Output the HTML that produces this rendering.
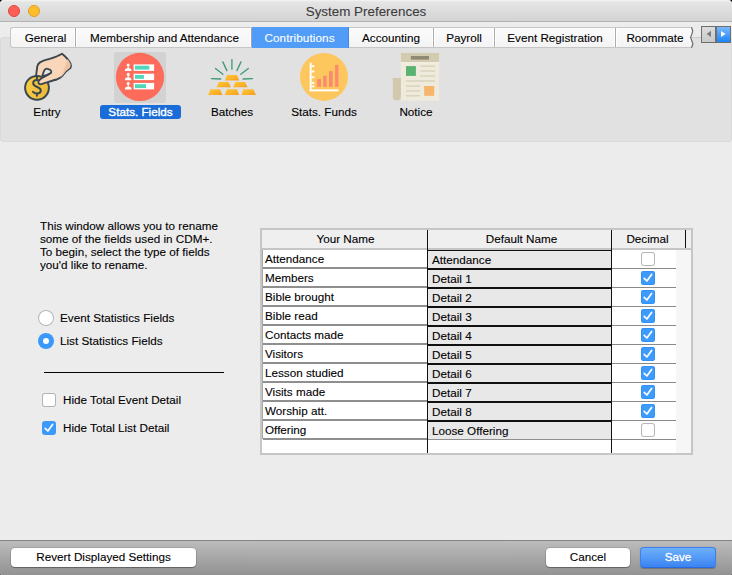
<!DOCTYPE html>
<html><head><meta charset="utf-8">
<style>
*{margin:0;padding:0;box-sizing:border-box}
html,body{width:732px;height:575px;overflow:hidden;background:#000}
.win *{-webkit-text-stroke:0.1px currentColor}
body{font-family:"Liberation Sans",sans-serif;color:#000;font-size:11.7px;position:relative}
.a{position:absolute}
.win{left:0;top:0;width:732px;height:575px;background:#ececec;border-radius:4px 4px 2px 2px;overflow:hidden}
.title{left:0;top:0;width:732px;height:22px;background:linear-gradient(#f4f4f4 0,#e5e5e5 2px,#d3d3d3 21px);border-bottom:1px solid #b3b3b3}
.tl{width:12px;height:12px;border-radius:50%}
.ttxt{left:0;width:732px;top:4px;text-align:center;font-size:13.4px;color:#3c3c3c;line-height:16px}
.panel{left:0;top:37px;width:732px;height:105px;background:#e1e1e1;border-radius:4px;box-shadow:0 0 0 1px #dadada inset}
.tabs{left:10px;top:27px;height:21px;width:678px;background:linear-gradient(#fbfbfb,#f3f3f3);border:1px solid #c6c6c6;border-right:none;border-radius:3px 0 0 3px}
.tab{top:0;height:19px;line-height:19px;text-align:center;white-space:nowrap}
.sep{top:0;width:1px;height:19px;background:#ababab;box-shadow:-1px 0 0 #fff,1px 0 0 #fff}
.lbl{top:104px;height:15px;line-height:15px;text-align:center;white-space:nowrap}
.row{height:19px;line-height:19px;white-space:nowrap}
.th{top:230px;height:18px;line-height:18px;text-align:center;white-space:nowrap}
.td{height:17px;line-height:17px;white-space:nowrap}
.cbx{width:14px;height:14px;border-radius:3px;background:#fff;box-shadow:inset 0 0 0 1px #b8b8b8}
.cbx.on{background:#3d9bfc;box-shadow:inset 0 0 0 0.5px #2a86f0}
</style></head><body>
<div class="a win">
  <div class="a title"></div>
  <svg class="a" style="left:8px;top:5px" width="12" height="12"><circle cx="6" cy="6" r="5.5" fill="#fd5f57" stroke="#e0443d" stroke-width="1"/></svg>
  <svg class="a" style="left:28px;top:5px" width="12" height="12"><circle cx="6" cy="6" r="5.5" fill="#febd2f" stroke="#de9f22" stroke-width="1"/></svg>
  <div class="a ttxt">System Preferences</div>

  <div class="a panel"></div>

  <!-- tabs -->
  <div class="a tabs">
    <div class="a tab" style="left:2.5px;width:64px">General</div>
    <div class="a sep" style="left:64px"></div>
    <div class="a tab" style="left:66px;width:175px">Membership and Attendance</div>
    <div class="a sep" style="left:240px;background:#a3a3a3"></div>
    <div class="a tab" style="left:241px;top:-1px;width:97px;height:21px;line-height:21px;background:#519cf6;color:#fff;box-shadow:inset -1px 0 0 #4a88dc;-webkit-text-stroke:0.25px #fff"><span style="position:relative;left:-1px;letter-spacing:0.1px">Contributions</span></div>
    <div class="a tab" style="left:338px;width:84px">Accounting</div>
    <div class="a sep" style="left:422px"></div>
    <div class="a tab" style="left:423px;width:60px">Payroll</div>
    <div class="a sep" style="left:483px"></div>
    <div class="a tab" style="left:484px;width:120px">Event Registration</div>
    <div class="a sep" style="left:604px"></div>
    <div class="a tab" style="left:604px;width:80px">Roommate</div>
  </div>

  <!-- tab scroller -->
  <div class="a" style="left:692px;top:37px;width:9px;height:1px;background:#cdcdcd"></div>
  <svg class="a" style="left:686px;top:27px" width="10" height="21" viewBox="0 0 10 21">
    <defs><linearGradient id="tabg" x1="0" y1="0" x2="0" y2="1"><stop offset="0" stop-color="#fbfbfb"/><stop offset="1" stop-color="#f3f3f3"/></linearGradient></defs>
    <path d="M0 0 H5.5 L6.7 3.8 L5.8 7.4 L4.6 10.6 L5.8 13.7 L6.9 16.9 L5.5 21 H0 Z" fill="url(#tabg)"/>
    <path d="M0 0.5 H5.7 M0 20.5 H5.7" stroke="#c6c6c6" stroke-width="1"/>
    <path d="M5.5 0.2 L6.7 3.8 L5.8 7.4 L4.6 10.6 L5.8 13.7 L6.9 16.9 L5.5 20.8" stroke="#6a6a6a" stroke-width="1.2" fill="none"/>
  </svg>
  <div class="a" style="left:701px;top:26px;width:30px;height:17px;background:#6e6e6e">
    <div class="a" style="left:1px;top:1px;width:13px;height:15px;background:linear-gradient(#dcdcdc,#c9c9c9)"></div>
    <div class="a" style="left:15.5px;top:1px;width:13.5px;height:15px;background:linear-gradient(#7ab8fb,#1b84f8)"></div>
    <svg class="a" style="left:5px;top:4px" width="6" height="8"><path d="M5 0.8 V7.1 L0.6 4 Z" fill="#7a7a7a"/></svg>
    <svg class="a" style="left:20px;top:4px" width="6" height="8"><path d="M0 1 V7.1 L4.6 4 Z" fill="#fff"/></svg>
  </div>

  <!-- toolbar icons -->
  <!-- entry icon -->
  <svg class="a" style="left:20px;top:50px" width="56" height="52" viewBox="0 0 56 52">
    <path d="M16.1 25.5 L17.3 16.3 C17.6 14.6 18.6 13.3 20 12.4 C22.5 11 25 10.1 27.6 9.4 C31 8.5 35.5 7.5 38.9 5.3 L42 3.75 C45.5 6.5 49 10.5 50.6 14 C51.1 15.2 51.3 16.5 50.5 17.8 C48.5 19.8 46.5 20.7 45 22.5 C43.5 24.5 42 27 39.5 28.2 C38 29 37 29.5 35.8 29.7 L22 31 Z" fill="#f9d5b9" stroke="#3a474d" stroke-width="1.9" stroke-linejoin="round"/>
    <path d="M47.5 9 C49 11 50.5 13.5 50.6 14.5 C50.8 16 50.3 17.3 49.5 18 C47.5 19.8 46.2 20.8 44.8 22.6 C43.5 24.5 42 26.6 39.8 27.8 C42 25 44 21 47.5 9 Z" fill="#eec3a3"/>
    <defs><linearGradient id="coin" x1="0" y1="0" x2="1" y2="0.3"><stop offset="0" stop-color="#f9cd47"/><stop offset="1" stop-color="#ecbb3b"/></linearGradient></defs><circle cx="17" cy="37.8" r="11.9" fill="url(#coin)" stroke="#3a474d" stroke-width="2"/>
    <path d="M20.4 31.6 C19.6 30.4 18.2 29.9 16.7 29.9 C14.4 29.9 12.9 31.6 13.2 33.5 C13.5 35.4 15.5 36.3 17.2 37 C19.2 37.8 20.9 38.8 20.8 40.6 C20.7 42.4 19 43.4 17 43.4 C15.3 43.4 13.8 42.7 13 41.8 M16.9 27.5 V29.9 M16.9 43.4 V45.8" fill="none" stroke="#3a474d" stroke-width="2" stroke-linecap="round"/>
    <path d="M36 29.6 C32 30.5 27 32.4 22.5 33.8 C21 34.3 19.8 34.5 19 33.8 C18.2 33 18.2 31.3 19.2 30.3 C21 28.6 24 26.8 26.4 25.7 C28 25 29.5 24 31 22.8 L37 24 Z" fill="#f9d5b9"/>
    <path d="M35.8 29.7 C32 30.5 27 32.4 22.5 33.8 C21 34.3 19.8 34.5 19 33.8 C18.2 33 18.2 31.3 19.2 30.3 C21 28.6 24 26.8 26.4 25.7 C28 25 29.5 24 31 22.8" fill="none" stroke="#3a474d" stroke-width="1.9" stroke-linecap="round" stroke-linejoin="round"/>
    <path d="M22.2 26.2 C22.9 24 23.5 21.6 24.5 20.1 C25.3 19 26.5 18.5 27.6 18.8 C29.2 19.2 30.8 20.2 31.3 21.2 C31.6 22 31 22.6 30.2 23.2 C27.8 24.6 24.8 25.6 22.2 26.2 Z" fill="#e2e2e2" stroke="#3a474d" stroke-width="1.8" stroke-linejoin="round"/>
  </svg>

  <div class="a" style="left:114px;top:52px;width:52px;height:51px;background:#d2d2d2;border-radius:3px"></div>
  <div class="a lbl" style="left:7px;width:80px">Entry</div>
  <div class="a" style="left:100px;top:105px;width:81px;height:14px;background:#1a6dd9;border-radius:3px"></div>
  <div class="a lbl" style="left:100px;width:81px;color:#fff;-webkit-text-stroke:0.35px #fff">Stats. Fields</div>
  <div class="a lbl" style="left:192px;width:80px">Batches</div>
  <div class="a lbl" style="left:284px;width:80px">Stats. Funds</div>
  <div class="a lbl" style="left:376px;width:80px">Notice</div>

  <!-- stats fields icon -->
  <svg class="a" style="left:112px;top:50px" width="56" height="56" viewBox="0 0 56 56">
    <circle cx="28" cy="26.9" r="24.1" fill="#fd6c5a"/>
    <g fill="#fff">
      <rect x="21.6" y="14.4" width="20.5" height="6.5"/><rect x="21.6" y="23.7" width="20.5" height="6.4"/><rect x="21.6" y="32.9" width="20.5" height="6.5"/>
    </g>
    <g fill="#52d6b9">
      <rect x="22.9" y="15.7" width="14.4" height="3.9"/><rect x="22.9" y="25" width="9" height="3.8"/><rect x="22.9" y="34.2" width="11.2" height="3.9"/>
    </g>
    <g fill="#fff">
      <ellipse cx="16.2" cy="15.1" rx="1.5" ry="1.7"/><rect x="15.7" y="16.0" width="1.0" height="2.2"/><path d="M12.9 20.9 C12.9 18.9 13.8 18.0 16.2 18.0 C18.6 18.0 19.5 18.9 19.5 20.9 Z"/>
      <ellipse cx="16.2" cy="24.4" rx="1.5" ry="1.7"/><rect x="15.7" y="25.3" width="1.0" height="2.2"/><path d="M12.9 30.2 C12.9 28.2 13.8 27.3 16.2 27.3 C18.6 27.3 19.5 28.2 19.5 30.2 Z"/>
      <ellipse cx="16.2" cy="33.6" rx="1.5" ry="1.7"/><rect x="15.7" y="34.5" width="1.0" height="2.2"/><path d="M12.9 39.4 C12.9 37.4 13.8 36.5 16.2 36.5 C18.6 36.5 19.5 37.4 19.5 39.4 Z"/>
    </g>
  </svg>
  <!-- batches icon -->
  <svg class="a" style="left:204px;top:54px" width="56" height="44" viewBox="0 0 56 44">
    <defs><linearGradient id="gold" x1="0" y1="0" x2="1" y2="1"><stop offset="0" stop-color="#ffc631"/><stop offset="0.5" stop-color="#fdb52a"/><stop offset="1" stop-color="#f09c26"/></linearGradient></defs>
    <g stroke="#3d9b6f" stroke-width="1.3" stroke-linecap="round" fill="none">
      <path d="M27.9 5.6 V15.2"/><path d="M18.8 7.9 L22.9 16.6"/><path d="M37 7.9 L32.9 16.6"/>
      <path d="M11.5 14.5 L18.9 20.3"/><path d="M44.3 14.5 L36.8 20.3"/><path d="M7.4 24.6 L16.7 25"/><path d="M39.1 25 L48.5 24.6"/>
    </g>
    <g fill="url(#gold)">
      <path d="M23 21 H32.9 L35.2 26.4 H21 Z"/>
      <path d="M14.9 27.9 H24.5 L26.8 33.3 H12.6 Z"/><path d="M31.4 27.9 H40.9 L43.6 33.3 H29.1 Z"/>
      <path d="M6.5 35.3 H16.1 L18.4 40.9 H4.2 Z"/><path d="M23 35.3 H32.9 L35.2 40.9 H20.7 Z"/><path d="M39.4 35.3 H49.3 L52 40.9 H37.5 Z"/>
    </g>
  </svg>
  <!-- stats funds icon -->
  <svg class="a" style="left:298px;top:50px" width="52" height="54" viewBox="0 0 52 54">
    <circle cx="26" cy="26.9" r="24" fill="#fdc75d"/>
    <g fill="#fff">
      <rect x="11.7" y="12.7" width="1.9" height="28.6"/><rect x="11.7" y="39.4" width="28.9" height="1.9"/>
      <rect x="13.6" y="15.3" width="2.8" height="1.8"/><rect x="13.6" y="20.6" width="2.8" height="1.8"/><rect x="13.6" y="26.3" width="2.8" height="1.8"/><rect x="13.6" y="32" width="2.8" height="1.8"/><rect x="13.6" y="35.5" width="2.8" height="1.8"/>
    </g>
    <g fill="#fb8a6f">
      <rect x="19.2" y="29.1" width="3.8" height="7.7"/><rect x="25.2" y="25.8" width="3.5" height="11"/><rect x="31" y="21.1" width="3.7" height="15.7"/><rect x="37.1" y="14.8" width="3.3" height="22"/>
    </g>
  </svg>
  <!-- notice icon -->
  <svg class="a" style="left:390px;top:50px" width="52" height="54" viewBox="0 0 52 54">
    <path d="M2.8 28 H11 V46.5 A4.1 4.1 0 0 1 2.8 46.5 Z" fill="#d1c8ad"/>
    <rect x="10.9" y="2.9" width="38.2" height="47.7" fill="#efebdc"/>
    <rect x="10.9" y="2.9" width="38.2" height="9.4" fill="#d3cbb0"/><rect x="10.9" y="12.3" width="38.2" height="1" fill="#f6f3ea"/>
    <rect x="20.9" y="6" width="18.1" height="3.6" fill="#8f8a74"/>
    <rect x="16" y="16.1" width="9.9" height="9.8" fill="#5ab371"/>
    <rect x="34.2" y="36" width="10" height="9.8" fill="#f7b46b"/>
    <g fill="#d8d0b7">
      <rect x="30.3" y="15.5" width="14.7" height="1.3"/><rect x="30.3" y="20.4" width="14.7" height="1.3"/><rect x="30.3" y="25.3" width="14.7" height="1.3"/>
      <rect x="16" y="30.3" width="29" height="1.3"/>
      <rect x="16" y="35.4" width="14" height="1.3"/><rect x="16" y="40.3" width="14" height="1.3"/><rect x="16" y="45.2" width="14" height="1.3"/>
    </g>
  </svg>

  <!-- main text -->
  <div class="a" style="left:40px;top:219px;width:200px;line-height:13px">This window allows you to rename<br>some of the fields used in CDM+.<br>To begin, select the type of fields<br>you'd like to rename.</div>

  <!-- radios -->
  <div class="a" style="left:38px;top:310px;width:16px;height:16px;border-radius:50%;background:#fff;box-shadow:inset 0 0 0 1px #b4b4b4"></div>
  <div class="a" style="left:60px;top:311px;line-height:14px">Event Statistics Fields</div>
  <div class="a" style="left:38px;top:333px;width:16px;height:16px;border-radius:50%;background:#3b99fc"></div>
  <div class="a" style="left:43px;top:338px;width:6px;height:6px;border-radius:50%;background:#fff"></div>
  <div class="a" style="left:60px;top:334px;line-height:14px">List Statistics Fields</div>

  <div class="a" style="left:44px;top:372px;width:180px;height:1px;background:#000"></div>

  <!-- checkboxes -->
  <div class="a" style="left:42px;top:393px;width:14px;height:14px;border-radius:3px;background:#fff;box-shadow:inset 0 0 0 1px #b4b4b4"></div>
  <div class="a" style="left:63px;top:393px;line-height:14px">Hide Total Event Detail</div>
  <div class="a" style="left:42px;top:421px;width:14px;height:14px;border-radius:3px;background:#3b99fc"></div>
  <svg class="a" style="left:42px;top:421px" width="14" height="14"><path d="M3.2 7.4 L5.9 10 L10.6 3.4" fill="none" stroke="#fff" stroke-width="1.7" stroke-linecap="round" stroke-linejoin="round"/></svg>
  <div class="a" style="left:63px;top:421px;line-height:14px">Hide Total List Detail</div>

  <!-- table -->
  <div class="a" style="left:260px;top:228px;width:433px;height:227px;background:#c6c6c6"></div>
  <div class="a" style="left:262px;top:230px;width:429px;height:18px;background:#efefef"></div>
  <div class="a" style="left:262px;top:248px;width:429px;height:2px;background:#c5c5c5"></div>
  <div class="a" style="left:262px;top:250px;width:414px;height:203px;background:#fff"></div>
  <div class="a" style="left:676px;top:250px;width:15px;height:203px;background:#f6f6f6"></div>
  <div class="a" style="left:428px;top:251px;width:183px;height:188px;background:#e8e8e8"></div>
  <div class="a" style="left:263px;top:267px;width:164px;height:2px;background:#8f8f8f"></div>
  <div class="a" style="left:612px;top:268px;width:64px;height:1px;background:#8a8a8a"></div>
  <div class="a" style="left:263px;top:286px;width:164px;height:2px;background:#8f8f8f"></div>
  <div class="a" style="left:612px;top:287px;width:64px;height:1px;background:#8a8a8a"></div>
  <div class="a" style="left:263px;top:305px;width:164px;height:2px;background:#8f8f8f"></div>
  <div class="a" style="left:612px;top:306px;width:64px;height:1px;background:#8a8a8a"></div>
  <div class="a" style="left:263px;top:324px;width:164px;height:2px;background:#8f8f8f"></div>
  <div class="a" style="left:612px;top:325px;width:64px;height:1px;background:#8a8a8a"></div>
  <div class="a" style="left:263px;top:343px;width:164px;height:2px;background:#8f8f8f"></div>
  <div class="a" style="left:612px;top:344px;width:64px;height:1px;background:#8a8a8a"></div>
  <div class="a" style="left:263px;top:362px;width:164px;height:2px;background:#8f8f8f"></div>
  <div class="a" style="left:612px;top:363px;width:64px;height:1px;background:#8a8a8a"></div>
  <div class="a" style="left:263px;top:381px;width:164px;height:2px;background:#8f8f8f"></div>
  <div class="a" style="left:612px;top:382px;width:64px;height:1px;background:#8a8a8a"></div>
  <div class="a" style="left:263px;top:400px;width:164px;height:2px;background:#8f8f8f"></div>
  <div class="a" style="left:612px;top:401px;width:64px;height:1px;background:#8a8a8a"></div>
  <div class="a" style="left:263px;top:419px;width:164px;height:2px;background:#8f8f8f"></div>
  <div class="a" style="left:612px;top:420px;width:64px;height:1px;background:#8a8a8a"></div>
  <div class="a" style="left:263px;top:438px;width:164px;height:2px;background:#8f8f8f"></div>
  <div class="a" style="left:612px;top:439px;width:64px;height:1px;background:#8a8a8a"></div>
  <div class="a" style="left:428px;top:250px;width:183px;height:1px;background:#111"></div>
  <div class="a" style="left:428px;top:268px;width:183px;height:2px;background:#111"></div>
  <div class="a" style="left:428px;top:287px;width:183px;height:2px;background:#111"></div>
  <div class="a" style="left:428px;top:306px;width:183px;height:2px;background:#111"></div>
  <div class="a" style="left:428px;top:325px;width:183px;height:2px;background:#111"></div>
  <div class="a" style="left:428px;top:344px;width:183px;height:2px;background:#111"></div>
  <div class="a" style="left:428px;top:363px;width:183px;height:2px;background:#111"></div>
  <div class="a" style="left:428px;top:382px;width:183px;height:2px;background:#111"></div>
  <div class="a" style="left:428px;top:401px;width:183px;height:2px;background:#111"></div>
  <div class="a" style="left:428px;top:420px;width:183px;height:2px;background:#111"></div>
  <div class="a" style="left:428px;top:439px;width:183px;height:1px;background:#8f8f8f"></div>
  <div class="a" style="left:262px;top:250px;width:1px;height:189px;background:#a6a6a6"></div>
  <div class="a" style="left:427px;top:230px;width:1px;height:223px;background:#111"></div>
  <div class="a" style="left:611px;top:230px;width:1px;height:223px;background:#111"></div>
  <div class="a" style="left:685px;top:230px;width:1px;height:18px;background:#111"></div>
  <div class="a th" style="left:263px;width:165px">Your Name</div>
  <div class="a th" style="left:430px;width:183px">Default Name</div>
  <div class="a th" style="left:611px;width:73px">Decimal</div>
  <div class="a td" style="left:265px;top:250px">Attendance</div>
  <div class="a td" style="left:432px;top:251px">Attendance</div>
  <div class="a cbx" style="left:641px;top:252px"></div>
  <div class="a td" style="left:265px;top:269px">Members</div>
  <div class="a td" style="left:432px;top:270px">Detail 1</div>
  <div class="a cbx on" style="left:641px;top:271px"><svg class="a" style="left:0;top:0" width="14" height="14"><path d="M3.2 7.4 L5.9 10 L10.6 3.4" fill="none" stroke="#fff" stroke-width="1.7" stroke-linecap="round" stroke-linejoin="round"/></svg></div>
  <div class="a td" style="left:265px;top:288px">Bible brought</div>
  <div class="a td" style="left:432px;top:289px">Detail 2</div>
  <div class="a cbx on" style="left:641px;top:290px"><svg class="a" style="left:0;top:0" width="14" height="14"><path d="M3.2 7.4 L5.9 10 L10.6 3.4" fill="none" stroke="#fff" stroke-width="1.7" stroke-linecap="round" stroke-linejoin="round"/></svg></div>
  <div class="a td" style="left:265px;top:307px">Bible read</div>
  <div class="a td" style="left:432px;top:308px">Detail 3</div>
  <div class="a cbx on" style="left:641px;top:309px"><svg class="a" style="left:0;top:0" width="14" height="14"><path d="M3.2 7.4 L5.9 10 L10.6 3.4" fill="none" stroke="#fff" stroke-width="1.7" stroke-linecap="round" stroke-linejoin="round"/></svg></div>
  <div class="a td" style="left:265px;top:326px">Contacts made</div>
  <div class="a td" style="left:432px;top:327px">Detail 4</div>
  <div class="a cbx on" style="left:641px;top:328px"><svg class="a" style="left:0;top:0" width="14" height="14"><path d="M3.2 7.4 L5.9 10 L10.6 3.4" fill="none" stroke="#fff" stroke-width="1.7" stroke-linecap="round" stroke-linejoin="round"/></svg></div>
  <div class="a td" style="left:265px;top:345px">Visitors</div>
  <div class="a td" style="left:432px;top:346px">Detail 5</div>
  <div class="a cbx on" style="left:641px;top:347px"><svg class="a" style="left:0;top:0" width="14" height="14"><path d="M3.2 7.4 L5.9 10 L10.6 3.4" fill="none" stroke="#fff" stroke-width="1.7" stroke-linecap="round" stroke-linejoin="round"/></svg></div>
  <div class="a td" style="left:265px;top:364px">Lesson studied</div>
  <div class="a td" style="left:432px;top:365px">Detail 6</div>
  <div class="a cbx on" style="left:641px;top:366px"><svg class="a" style="left:0;top:0" width="14" height="14"><path d="M3.2 7.4 L5.9 10 L10.6 3.4" fill="none" stroke="#fff" stroke-width="1.7" stroke-linecap="round" stroke-linejoin="round"/></svg></div>
  <div class="a td" style="left:265px;top:383px">Visits made</div>
  <div class="a td" style="left:432px;top:384px">Detail 7</div>
  <div class="a cbx on" style="left:641px;top:385px"><svg class="a" style="left:0;top:0" width="14" height="14"><path d="M3.2 7.4 L5.9 10 L10.6 3.4" fill="none" stroke="#fff" stroke-width="1.7" stroke-linecap="round" stroke-linejoin="round"/></svg></div>
  <div class="a td" style="left:265px;top:402px">Worship att.</div>
  <div class="a td" style="left:432px;top:403px">Detail 8</div>
  <div class="a cbx on" style="left:641px;top:404px"><svg class="a" style="left:0;top:0" width="14" height="14"><path d="M3.2 7.4 L5.9 10 L10.6 3.4" fill="none" stroke="#fff" stroke-width="1.7" stroke-linecap="round" stroke-linejoin="round"/></svg></div>
  <div class="a td" style="left:265px;top:421px">Offering</div>
  <div class="a td" style="left:432px;top:422px">Loose Offering</div>
  <div class="a cbx" style="left:641px;top:423px"></div>
  <!-- /table -->

  <!-- bottom bar -->
  <div class="a" style="left:0;top:540px;width:732px;height:35px;background:linear-gradient(#bcbcbc,#929292);border-top:1px solid #858585"></div>
  <div class="a" style="left:11px;top:548px;width:185px;height:19px;background:#fff;border-radius:4px;box-shadow:0 0 0 0.5px rgba(0,0,0,.22),0 1px 1px rgba(0,0,0,.3);text-align:center;line-height:17px">Revert Displayed Settings</div>
  <div class="a" style="left:546px;top:548px;width:84px;height:19px;background:#fff;border-radius:4px;box-shadow:0 0 0 0.5px rgba(0,0,0,.22),0 1px 1px rgba(0,0,0,.3);text-align:center;line-height:17px">Cancel</div>
  <div class="a" style="left:640px;top:547px;width:76px;height:21px;background:linear-gradient(#6eb0fa,#3a84f1);border:1px solid #3f80ec;border-bottom-color:#2a68e0;border-radius:4px;box-shadow:0 0.5px 1px rgba(0,0,0,.25);text-align:center;line-height:17px;color:#fff;-webkit-text-stroke:0.3px #fff">Save</div>
</div>
</body></html>
